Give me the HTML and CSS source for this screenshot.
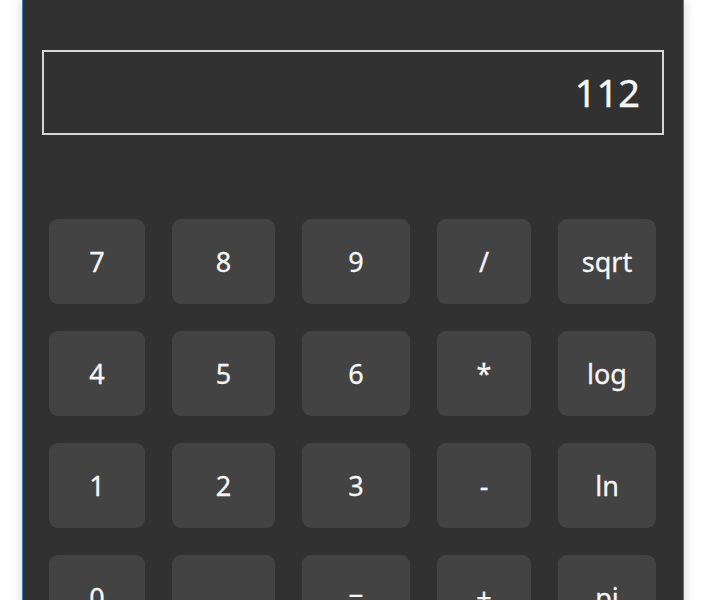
FILE: index.html
```html
<!DOCTYPE html>
<html lang="en">
<head>
  <meta charset="UTF-8">
  <meta name="viewport" content="width=device-width, initial-scale=1.0">
  <title>Calculator</title>
  <link rel="stylesheet" href="styles.css">
</head>
<body>
  <div class="window">
    <div class="display">112</div>
    <div class="keypad">
      <button>7</button>
      <button>8</button>
      <button>9</button>
      <button>/</button>
      <button>sqrt</button>
      <button>4</button>
      <button>5</button>
      <button>6</button>
      <button>*</button>
      <button>log</button>
      <button>1</button>
      <button>2</button>
      <button>3</button>
      <button>-</button>
      <button>ln</button>
      <button>0</button>
      <button>.</button>
      <button>=</button>
      <button>+</button>
      <button>pi</button>
    </div>
  </div>
</body>
</html>
```

FILE: styles.css
```css
html, body {
  height: 100%;
}
body {
  margin: 0;
  padding: 0;
  background-color: #ffffff;
  font-family: 'Noto Sans', 'DejaVu Sans', sans-serif;
  overflow: hidden;
}
.window {
  margin-left: 22px;
  width: 660px;
  height: 720px;
  background-color: #313131;
  border-left: 1px solid #3c7fc1;
  border-right: 1px solid #3c7fc1;
  box-shadow: 0 0 10px rgba(0, 0, 0, 0.18);
  padding: 50px 0 0 0;
  box-sizing: content-box;
}
.display {
  margin: 0 19px;
  height: 81px;
  border: 2px solid #d6d6d6;
  color: #f6f6f6;
  font-size: 38px;
  line-height: 81px;
  text-align: right;
  padding-right: 22px;
  -webkit-text-stroke: 0.4px #f6f6f6;
}
.keypad {
  display: grid;
  grid-template-columns: 96px 103px 108px 94px 98px;
  grid-auto-rows: 85px;
  gap: 27px;
  margin-top: 84px;
  padding-left: 26px;
}
.keypad button {
  background-color: #434343;
  color: #f6f6f6;
  border: none;
  border-radius: 9px;
  font-family: inherit;
  font-size: 27px;
  padding: 0;
  -webkit-text-stroke: 0.3px #f6f6f6;
}
```
